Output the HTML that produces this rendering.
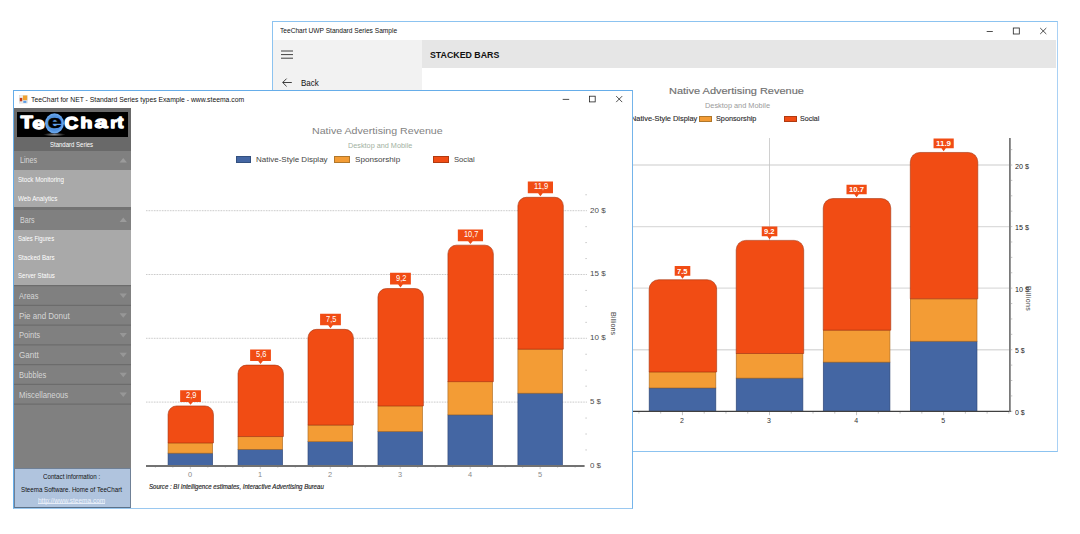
<!DOCTYPE html>
<html><head><meta charset="utf-8"><title>TeeChart Standard Series</title>
<style>
html,body{margin:0;padding:0;}
body{width:1080px;height:534px;background:#fff;position:relative;overflow:hidden;font-family:"Liberation Sans", sans-serif;}
div,span.t,svg{position:absolute;}
span.t{white-space:nowrap;}
</style></head><body>
<div style="left:272.00px;top:21.00px;width:786.00px;height:431.00px;background:#fff;box-sizing:border-box;border:1px solid #8cc3f0;border-right:1.9px solid #a9d1f5;"></div>
<div style="left:273.00px;top:40.00px;width:149.20px;height:411.00px;background:#f2f2f2;"></div>
<div style="left:422.20px;top:40.00px;width:633.90px;height:27.80px;background:#e6e6e6;"></div>
<span class="t" style="left:280.20px;top:26.68px;font-size:8px;line-height:8px;color:#111;transform:scaleX(0.8238);transform-origin:0 0;">TeeChart UWP Standard Series Sample</span>
<svg width="1080" height="534" style="left:0;top:0" viewBox="0 0 1080 534">
<g stroke="#222" stroke-width="0.8" fill="none">
<path d="M986.7 31.5 H992.8"/>
<rect x="1013.3" y="28" width="6" height="6"/>
<path d="M1040.2 28 L1046.3 34 M1046.3 28 L1040.2 34"/>
</g>
<g stroke="#111" stroke-width="0.8" fill="none">
<path d="M281 51 H293 M281 54.6 H293 M281 58.2 H293"/>
<path d="M291.8 82.5 H282.8 M286.6 78.6 L282.7 82.5 L286.6 86.4"/>
</g>
</svg>
<span class="t" style="left:429.70px;top:50.00px;font-size:9.6px;line-height:9.6px;color:#111;font-weight:bold;transform:scaleX(0.9177);transform-origin:0 0;">STACKED BARS</span>
<span class="t" style="left:301.20px;top:77.80px;font-size:9.6px;line-height:9.6px;color:#111;transform:scaleX(0.8340);transform-origin:0 0;">Back</span>
<svg width="1080" height="534" style="left:0;top:0" viewBox="0 0 1080 534"><path d="M600 349.73 H1009" stroke="#dcdcdc" stroke-width="1.3"/>
<path d="M600 288.15 H1009" stroke="#dcdcdc" stroke-width="1.3"/>
<path d="M600 226.58 H1009" stroke="#dcdcdc" stroke-width="1.3"/>
<path d="M600 165.00 H1009" stroke="#dcdcdc" stroke-width="1.3"/>
<path d="M769.5 138 V411" stroke="#c4c4c4" stroke-width="0.8"/>
<path d="M1011 411.30 h1.3" stroke="#999" stroke-width="0.6"/>
<path d="M1011 395.91 h1.3" stroke="#999" stroke-width="0.6"/>
<path d="M1011 380.51 h1.3" stroke="#999" stroke-width="0.6"/>
<path d="M1011 365.12 h1.3" stroke="#999" stroke-width="0.6"/>
<path d="M1011 349.73 h1.3" stroke="#999" stroke-width="0.6"/>
<path d="M1011 334.33 h1.3" stroke="#999" stroke-width="0.6"/>
<path d="M1011 318.94 h1.3" stroke="#999" stroke-width="0.6"/>
<path d="M1011 303.54 h1.3" stroke="#999" stroke-width="0.6"/>
<path d="M1011 288.15 h1.3" stroke="#999" stroke-width="0.6"/>
<path d="M1011 272.76 h1.3" stroke="#999" stroke-width="0.6"/>
<path d="M1011 257.36 h1.3" stroke="#999" stroke-width="0.6"/>
<path d="M1011 241.97 h1.3" stroke="#999" stroke-width="0.6"/>
<path d="M1011 226.58 h1.3" stroke="#999" stroke-width="0.6"/>
<path d="M1011 211.18 h1.3" stroke="#999" stroke-width="0.6"/>
<path d="M1011 195.79 h1.3" stroke="#999" stroke-width="0.6"/>
<path d="M1011 180.39 h1.3" stroke="#999" stroke-width="0.6"/>
<path d="M1011 165.00 h1.3" stroke="#999" stroke-width="0.6"/>
<path d="M1011 149.61 h1.3" stroke="#999" stroke-width="0.6"/>
<path d="M595.40 412 v3.2" stroke="#999" stroke-width="0.6"/>
<path d="M617.16 412 v1.6" stroke="#999" stroke-width="0.6"/>
<path d="M638.92 412 v1.6" stroke="#999" stroke-width="0.6"/>
<path d="M660.69 412 v1.6" stroke="#999" stroke-width="0.6"/>
<path d="M682.45 412 v3.2" stroke="#999" stroke-width="0.6"/>
<path d="M704.21 412 v1.6" stroke="#999" stroke-width="0.6"/>
<path d="M725.98 412 v1.6" stroke="#999" stroke-width="0.6"/>
<path d="M747.74 412 v1.6" stroke="#999" stroke-width="0.6"/>
<path d="M769.50 412 v3.2" stroke="#999" stroke-width="0.6"/>
<path d="M791.26 412 v1.6" stroke="#999" stroke-width="0.6"/>
<path d="M813.03 412 v1.6" stroke="#999" stroke-width="0.6"/>
<path d="M834.79 412 v1.6" stroke="#999" stroke-width="0.6"/>
<path d="M856.55 412 v3.2" stroke="#999" stroke-width="0.6"/>
<path d="M878.31 412 v1.6" stroke="#999" stroke-width="0.6"/>
<path d="M900.08 412 v1.6" stroke="#999" stroke-width="0.6"/>
<path d="M921.84 412 v1.6" stroke="#999" stroke-width="0.6"/>
<path d="M943.60 412 v3.2" stroke="#999" stroke-width="0.6"/>
<path d="M965.36 412 v1.6" stroke="#999" stroke-width="0.6"/>
<path d="M987.12 412 v1.6" stroke="#999" stroke-width="0.6"/>
<path d="M1008.89 412 v1.6" stroke="#999" stroke-width="0.6"/>
<rect x="475.05" y="399.00" width="66.70" height="12.30" fill="#4466A3" stroke="#2c4372" stroke-width="0.6"/>
<rect x="475.05" y="389.17" width="66.70" height="9.84" fill="#F39C35" stroke="#a7671f" stroke-width="0.6"/>
<path d="M475.05 389.17 L475.05 363.01 A9.5 9.5 0 0 1 484.55 353.51 L533.05 353.51 A9.5 9.5 0 0 1 542.55 363.01 L542.55 389.17 Z" fill="#F14C14" stroke="#a5330d" stroke-width="0.6"/>
<rect x="562.10" y="395.31" width="66.70" height="15.99" fill="#4466A3" stroke="#2c4372" stroke-width="0.6"/>
<rect x="562.10" y="383.02" width="66.70" height="12.30" fill="#F39C35" stroke="#a7671f" stroke-width="0.6"/>
<path d="M562.10 383.02 L562.10 323.66 A9.5 9.5 0 0 1 571.60 314.16 L620.10 314.16 A9.5 9.5 0 0 1 629.60 323.66 L629.60 383.02 Z" fill="#F14C14" stroke="#a5330d" stroke-width="0.6"/>
<rect x="649.15" y="387.94" width="66.70" height="23.36" fill="#4466A3" stroke="#2c4372" stroke-width="0.6"/>
<rect x="649.15" y="371.95" width="66.70" height="15.99" fill="#F39C35" stroke="#a7671f" stroke-width="0.6"/>
<path d="M649.15 371.95 L649.15 289.23 A9.5 9.5 0 0 1 658.65 279.73 L707.15 279.73 A9.5 9.5 0 0 1 716.65 289.23 L716.65 371.95 Z" fill="#F14C14" stroke="#a5330d" stroke-width="0.6"/>
<rect x="736.20" y="378.10" width="66.70" height="33.20" fill="#4466A3" stroke="#2c4372" stroke-width="0.6"/>
<rect x="736.20" y="353.51" width="66.70" height="24.59" fill="#F39C35" stroke="#a7671f" stroke-width="0.6"/>
<path d="M736.20 353.51 L736.20 249.88 A9.5 9.5 0 0 1 745.70 240.38 L794.20 240.38 A9.5 9.5 0 0 1 803.70 249.88 L803.70 353.51 Z" fill="#F14C14" stroke="#a5330d" stroke-width="0.6"/>
<rect x="823.25" y="362.11" width="66.70" height="49.19" fill="#4466A3" stroke="#2c4372" stroke-width="0.6"/>
<rect x="823.25" y="330.14" width="66.70" height="31.97" fill="#F39C35" stroke="#a7671f" stroke-width="0.6"/>
<path d="M823.25 330.14 L823.25 208.07 A9.5 9.5 0 0 1 832.75 198.57 L881.25 198.57 A9.5 9.5 0 0 1 890.75 208.07 L890.75 330.14 Z" fill="#F14C14" stroke="#a5330d" stroke-width="0.6"/>
<rect x="910.30" y="341.21" width="66.70" height="70.09" fill="#4466A3" stroke="#2c4372" stroke-width="0.6"/>
<rect x="910.30" y="298.79" width="66.70" height="42.42" fill="#F39C35" stroke="#a7671f" stroke-width="0.6"/>
<path d="M910.30 298.79 L910.30 161.96 A9.5 9.5 0 0 1 919.80 152.46 L968.30 152.46 A9.5 9.5 0 0 1 977.80 161.96 L977.80 298.79 Z" fill="#F14C14" stroke="#a5330d" stroke-width="0.6"/>
<path d="M600 411.3 H1011" stroke="#404040" stroke-width="1.3"/>
<path d="M1009.9 138 V412" stroke="#737373" stroke-width="1.7"/>
<path d="M674.70 266.03 h15.6 v9.6 h-5.60 l-2.2 3 l-2.2 -3 h-5.60 Z" fill="#F14C14"/>
<path d="M761.75 226.62 h15.6 v9.6 h-5.60 l-2.2 3 l-2.2 -3 h-5.60 Z" fill="#F14C14"/>
<path d="M846.50 184.75 h20.2 v9.6 h-7.90 l-2.2 3 l-2.2 -3 h-7.90 Z" fill="#F14C14"/>
<path d="M933.55 138.57 h20.2 v9.6 h-7.90 l-2.2 3 l-2.2 -3 h-7.90 Z" fill="#F14C14"/></svg>
<span class="t" style="left:677.25px;top:267.50px;font-size:7px;line-height:7px;color:#fff;font-weight:bold;transform:scaleX(1.0787);transform-origin:0 0;">7.5</span>
<span class="t" style="left:764.30px;top:228.09px;font-size:7px;line-height:7px;color:#fff;font-weight:bold;transform:scaleX(1.0787);transform-origin:0 0;">9.2</span>
<span class="t" style="left:849.10px;top:186.22px;font-size:7px;line-height:7px;color:#fff;font-weight:bold;transform:scaleX(1.1009);transform-origin:0 0;">10.7</span>
<span class="t" style="left:936.15px;top:140.04px;font-size:7px;line-height:7px;color:#fff;font-weight:bold;transform:scaleX(1.1321);transform-origin:0 0;">11.9</span>
<span class="t" style="left:669.30px;top:87.04px;font-size:9.3px;line-height:9.3px;color:#6f6f6f;transform:scaleX(1.1811);transform-origin:0 0;-webkit-text-stroke:0.15px #6f6f6f;">Native Advertising Revenue</span>
<span class="t" style="left:704.70px;top:101.88px;font-size:7.6px;line-height:7.6px;color:#9a9a9a;transform:scaleX(0.9683);transform-origin:0 0;">Desktop and Mobile</span>
<span class="t" style="left:631.20px;top:115.37px;font-size:7px;line-height:7px;color:#2c2c2c;transform:scaleX(1.0584);transform-origin:0 0;-webkit-text-stroke:0.12px #2c2c2c;">Native-Style Display</span>
<span class="t" style="left:715.60px;top:115.37px;font-size:7px;line-height:7px;color:#2c2c2c;transform:scaleX(1.0380);transform-origin:0 0;-webkit-text-stroke:0.12px #2c2c2c;">Sponsorship</span>
<span class="t" style="left:800.20px;top:115.37px;font-size:7px;line-height:7px;color:#2c2c2c;transform:scaleX(1.0169);transform-origin:0 0;-webkit-text-stroke:0.12px #2c2c2c;">Social</span>
<div style="left:699.20px;top:115.70px;width:13.00px;height:6.00px;background:#F39C35;box-sizing:border-box;border:0.5px solid #b0772b;"></div>
<div style="left:783.70px;top:115.70px;width:13.30px;height:6.00px;background:#F14C14;box-sizing:border-box;border:0.5px solid #b03a10;"></div>
<span class="t" style="left:1014.50px;top:408.87px;font-size:7px;line-height:7px;color:#222;transform:scaleX(0.9965);transform-origin:0 0;">0 $</span>
<span class="t" style="left:1014.50px;top:347.30px;font-size:7px;line-height:7px;color:#222;transform:scaleX(0.9965);transform-origin:0 0;">5 $</span>
<span class="t" style="left:1014.50px;top:285.72px;font-size:7px;line-height:7px;color:#222;transform:scaleX(1.0275);transform-origin:0 0;">10 $</span>
<span class="t" style="left:1014.50px;top:224.15px;font-size:7px;line-height:7px;color:#222;transform:scaleX(1.0275);transform-origin:0 0;">15 $</span>
<span class="t" style="left:1014.50px;top:162.57px;font-size:7px;line-height:7px;color:#222;transform:scaleX(1.0275);transform-origin:0 0;">20 $</span>
<span class="t" style="left:680.05px;top:417.07px;font-size:7px;line-height:7px;color:#333;">2</span>
<span class="t" style="left:767.10px;top:417.07px;font-size:7px;line-height:7px;color:#333;">3</span>
<span class="t" style="left:854.15px;top:417.07px;font-size:7px;line-height:7px;color:#333;">4</span>
<span class="t" style="left:941.20px;top:417.07px;font-size:7px;line-height:7px;color:#333;">5</span>
<div style="left:1031.3px;top:286.2px;width:0;height:0;transform:rotate(90deg);transform-origin:0 0;"><span class="t" style="left:0;top:0;font-size:7px;line-height:6px;color:#444;letter-spacing:0.35px;">Billions</span></div>
<div style="left:13.00px;top:90.00px;width:620.10px;height:418.80px;background:#fff;box-sizing:border-box;border:1px solid #66ade9;border-right:1.1px solid #74b4ea;border-bottom:1.1px solid #9ac8f0;"></div>
<svg width="10" height="10" style="left:18.8px;top:94.6px" viewBox="0 0 10 10">
<rect x="0.4" y="0.7" width="7.8" height="7.4" fill="#efefef" stroke="#d2d2d2" stroke-width="0.5"/>
<rect x="0.8" y="2.9" width="2.5" height="3.4" fill="#c8401c"/>
<rect x="3.9" y="0.5" width="4.3" height="4.7" fill="#efa22f"/>
<rect x="4.3" y="5.8" width="3.1" height="2.1" fill="#5a9ce6"/>
</svg>
<span class="t" style="left:30.90px;top:95.98px;font-size:7.6px;line-height:7.6px;color:#111;transform:scaleX(0.8942);transform-origin:0 0;">TeeChart for NET - Standard Series types Example - www.steema.com</span>
<svg width="1080" height="534" style="left:0;top:0" viewBox="0 0 1080 534">
<g stroke="#222" stroke-width="0.8" fill="none">
<path d="M562.7 99.4 H569.2"/>
<rect x="589.5" y="96.2" width="5.7" height="5.7"/>
<path d="M616.2 96.1 L622.2 102.1 M622.2 96.1 L616.2 102.1"/>
</g></svg>
<div style="left:14.00px;top:108.30px;width:117.00px;height:360.20px;background:#808080;"></div>
<div style="left:14.00px;top:108.30px;width:117.00px;height:42.70px;background:#696969;"></div>
<div style="left:17.00px;top:111.80px;width:111.20px;height:25.40px;background:#000;"></div>
<svg width="112" height="26" style="left:17px;top:111.8px" viewBox="0 0 112 26">
<defs>
<radialGradient id="lg" cx="50%" cy="50%" r="50%"><stop offset="0" stop-color="#6aa5ea"/><stop offset="0.7" stop-color="#4f90de"/><stop offset="0.93" stop-color="#6ba7ea"/><stop offset="1" stop-color="#4a86d4"/></radialGradient>
<radialGradient id="sh" cx="50%" cy="50%" r="50%"><stop offset="0" stop-color="#8a8a8a"/><stop offset="0.6" stop-color="#3a3a3a"/><stop offset="1" stop-color="#000"/></radialGradient>
</defs>
<ellipse cx="37.4" cy="22.6" rx="11.2" ry="1.8" fill="url(#sh)"/>
<g font-family="Liberation Sans, sans-serif" font-weight="bold" stroke-linejoin="round">
<text transform="matrix(0.10811 0 0 0.07818 15.400 16.544)" font-size="200" fill="#fff" stroke="#fff" stroke-width="17.18">e</text>
<text transform="matrix(0.09836 0 0 0.08188 3.800 16.400)" font-size="200" fill="#fff" stroke="#fff" stroke-width="17.75">T</text>
<text transform="matrix(0.09444 0 0 0.08521 47.400 16.630)" font-size="200" fill="#fff" stroke="#fff" stroke-width="17.81">C</text>
<text transform="matrix(0.09672 0 0 0.07724 63.400 16.300)" font-size="200" fill="#fff" stroke="#fff" stroke-width="18.39">h</text>
<text transform="matrix(0.11504 0 0 0.07818 77.800 16.444)" font-size="200" fill="#fff" stroke="#fff" stroke-width="16.56">a</text>
<text transform="matrix(0.08205 0 0 0.07685 93.400 16.300)" font-size="200" fill="#fff" stroke="#fff" stroke-width="20.14">r</text>
<text transform="matrix(0.08657 0 0 0.08195 100.600 16.336)" font-size="200" fill="#fff" stroke="#fff" stroke-width="18.99">t</text>
<ellipse cx="37.5" cy="11.3" rx="9.5" ry="10.1" fill="url(#lg)"/>
<text transform="matrix(0.12523 0 0 0.09545 30.750 16.459)" font-size="200" fill="#000" stroke="#000" stroke-width="6.34">e</text>
</g>
</svg>
<span class="t" style="left:50.20px;top:140.83px;font-size:7.7px;line-height:7.7px;color:#fff;transform:scaleX(0.7816);transform-origin:0 0;">Standard Series</span>
<div style="left:14.00px;top:151.00px;width:117.00px;height:18.50px;background:#808080;"></div>
<div style="left:14.00px;top:169.50px;width:117.00px;height:38.50px;background:#a9a9a9;"></div>
<div style="left:14.00px;top:207.40px;width:117.00px;height:2.90px;background:#737373;"></div>
<div style="left:14.00px;top:210.30px;width:117.00px;height:19.50px;background:#808080;"></div>
<div style="left:14.00px;top:229.80px;width:117.00px;height:55.80px;background:#a9a9a9;"></div>
<span class="t" style="left:20.10px;top:156.49px;font-size:8.8px;line-height:8.8px;color:#d6d6d6;transform:scaleX(0.8178);transform-origin:0 0;">Lines</span>
<span class="t" style="left:20.10px;top:215.99px;font-size:8.8px;line-height:8.8px;color:#d6d6d6;transform:scaleX(0.8069);transform-origin:0 0;">Bars</span>
<span class="t" style="left:19.30px;top:291.89px;font-size:8.8px;line-height:8.8px;color:#d6d6d6;transform:scaleX(0.8484);transform-origin:0 0;">Areas</span>
<span class="t" style="left:19.30px;top:311.59px;font-size:8.8px;line-height:8.8px;color:#d6d6d6;transform:scaleX(0.9092);transform-origin:0 0;">Pie and Donut</span>
<span class="t" style="left:19.30px;top:331.19px;font-size:8.8px;line-height:8.8px;color:#d6d6d6;transform:scaleX(0.8629);transform-origin:0 0;">Points</span>
<span class="t" style="left:19.30px;top:350.99px;font-size:8.8px;line-height:8.8px;color:#d6d6d6;transform:scaleX(0.9203);transform-origin:0 0;">Gantt</span>
<span class="t" style="left:19.30px;top:371.09px;font-size:8.8px;line-height:8.8px;color:#d6d6d6;transform:scaleX(0.8586);transform-origin:0 0;">Bubbles</span>
<span class="t" style="left:19.30px;top:390.89px;font-size:8.8px;line-height:8.8px;color:#d6d6d6;transform:scaleX(0.8825);transform-origin:0 0;">Miscellaneous</span>
<svg width="1080" height="534" style="left:0;top:0" viewBox="0 0 1080 534"><path d="M119.6 162.50 L126.9 162.50 L123.25 158.10 Z" fill="#9b9b9b"/>
<path d="M119.6 222.00 L126.9 222.00 L123.25 217.60 Z" fill="#9b9b9b"/>
<path d="M119.6 293.60 L126.9 293.60 L123.25 298.10 Z" fill="#979797"/>
<path d="M119.6 313.30 L126.9 313.30 L123.25 317.80 Z" fill="#979797"/>
<path d="M119.6 332.90 L126.9 332.90 L123.25 337.40 Z" fill="#979797"/>
<path d="M119.6 352.70 L126.9 352.70 L123.25 357.20 Z" fill="#979797"/>
<path d="M119.6 372.80 L126.9 372.80 L123.25 377.30 Z" fill="#979797"/>
<path d="M119.6 392.60 L126.9 392.60 L123.25 397.10 Z" fill="#979797"/>
<path d="M14 285.60 H131" stroke="#6c6c6c" stroke-width="1.1"/>
<path d="M14 305.40 H131" stroke="#6c6c6c" stroke-width="1.1"/>
<path d="M14 325.10 H131" stroke="#6c6c6c" stroke-width="1.1"/>
<path d="M14 344.90 H131" stroke="#6c6c6c" stroke-width="1.1"/>
<path d="M14 364.60 H131" stroke="#6c6c6c" stroke-width="1.1"/>
<path d="M14 384.40 H131" stroke="#6c6c6c" stroke-width="1.1"/>
<path d="M14 404.10 H131" stroke="#6c6c6c" stroke-width="1.1"/></svg>
<span class="t" style="left:18.20px;top:175.73px;font-size:7.7px;line-height:7.7px;color:#fff;transform:scaleX(0.8033);transform-origin:0 0;">Stock Monitoring</span>
<span class="t" style="left:18.20px;top:194.63px;font-size:7.7px;line-height:7.7px;color:#fff;transform:scaleX(0.8164);transform-origin:0 0;">Web Analytics</span>
<span class="t" style="left:18.20px;top:235.23px;font-size:7.7px;line-height:7.7px;color:#fff;transform:scaleX(0.7681);transform-origin:0 0;">Sales Figures</span>
<span class="t" style="left:18.20px;top:253.63px;font-size:7.7px;line-height:7.7px;color:#fff;transform:scaleX(0.8025);transform-origin:0 0;">Stacked Bars</span>
<span class="t" style="left:18.20px;top:272.33px;font-size:7.7px;line-height:7.7px;color:#fff;transform:scaleX(0.7901);transform-origin:0 0;">Server Status</span>
<div style="left:14.00px;top:468.40px;width:117.00px;height:39.40px;background:#b0c4de;box-sizing:border-box;border:0.8px solid #6f8096;border-bottom:1px solid #5c7189;"></div>
<span class="t" style="left:43.40px;top:473.28px;font-size:7.8px;line-height:7.8px;color:#111;transform:scaleX(0.7950);transform-origin:0 0;">Contact information :</span>
<span class="t" style="left:21.00px;top:485.88px;font-size:7.8px;line-height:7.8px;color:#111;transform:scaleX(0.7935);transform-origin:0 0;">Steema Software. Home of TeeChart</span>
<span class="t" style="left:38.00px;top:496.88px;font-size:7.8px;line-height:7.8px;color:#eef3fb;transform:scaleX(0.8336);transform-origin:0 0;">http://www.steema.com</span>
<div style="left:38.00px;top:503.00px;width:67.20px;height:0.70px;background:#e6edf8;"></div>
<svg width="1080" height="534" style="left:0;top:0" viewBox="0 0 1080 534"><path d="M146 402.10 H587.5" stroke="#adadad" stroke-width="0.8" stroke-dasharray="0.8 0.8"/>
<path d="M146 338.30 H587.5" stroke="#adadad" stroke-width="0.8" stroke-dasharray="0.8 0.8"/>
<path d="M146 274.50 H587.5" stroke="#adadad" stroke-width="0.8" stroke-dasharray="0.8 0.8"/>
<path d="M146 210.70 H587.5" stroke="#adadad" stroke-width="0.8" stroke-dasharray="0.8 0.8"/>
<path d="M585.4 449.95 h1.4" stroke="#aaa" stroke-width="0.7"/>
<path d="M585.4 434.00 h1.4" stroke="#aaa" stroke-width="0.7"/>
<path d="M585.4 418.05 h1.4" stroke="#aaa" stroke-width="0.7"/>
<path d="M585.4 386.15 h1.4" stroke="#aaa" stroke-width="0.7"/>
<path d="M585.4 370.20 h1.4" stroke="#aaa" stroke-width="0.7"/>
<path d="M585.4 354.25 h1.4" stroke="#aaa" stroke-width="0.7"/>
<path d="M585.4 322.35 h1.4" stroke="#aaa" stroke-width="0.7"/>
<path d="M585.4 306.40 h1.4" stroke="#aaa" stroke-width="0.7"/>
<path d="M585.4 290.45 h1.4" stroke="#aaa" stroke-width="0.7"/>
<path d="M585.4 258.55 h1.4" stroke="#aaa" stroke-width="0.7"/>
<path d="M585.4 242.60 h1.4" stroke="#aaa" stroke-width="0.7"/>
<path d="M585.4 226.65 h1.4" stroke="#aaa" stroke-width="0.7"/>
<path d="M585.4 194.75 h1.4" stroke="#aaa" stroke-width="0.7"/>
<path d="M155.37 466.4 v1.4" stroke="#aaa" stroke-width="0.6"/>
<path d="M172.86 466.4 v1.4" stroke="#aaa" stroke-width="0.6"/>
<path d="M190.35 466.4 v2.8" stroke="#aaa" stroke-width="0.6"/>
<path d="M207.84 466.4 v1.4" stroke="#aaa" stroke-width="0.6"/>
<path d="M225.33 466.4 v1.4" stroke="#aaa" stroke-width="0.6"/>
<path d="M242.82 466.4 v1.4" stroke="#aaa" stroke-width="0.6"/>
<path d="M260.31 466.4 v2.8" stroke="#aaa" stroke-width="0.6"/>
<path d="M277.80 466.4 v1.4" stroke="#aaa" stroke-width="0.6"/>
<path d="M295.29 466.4 v1.4" stroke="#aaa" stroke-width="0.6"/>
<path d="M312.78 466.4 v1.4" stroke="#aaa" stroke-width="0.6"/>
<path d="M330.27 466.4 v2.8" stroke="#aaa" stroke-width="0.6"/>
<path d="M347.76 466.4 v1.4" stroke="#aaa" stroke-width="0.6"/>
<path d="M365.25 466.4 v1.4" stroke="#aaa" stroke-width="0.6"/>
<path d="M382.74 466.4 v1.4" stroke="#aaa" stroke-width="0.6"/>
<path d="M400.23 466.4 v2.8" stroke="#aaa" stroke-width="0.6"/>
<path d="M417.72 466.4 v1.4" stroke="#aaa" stroke-width="0.6"/>
<path d="M435.21 466.4 v1.4" stroke="#aaa" stroke-width="0.6"/>
<path d="M452.70 466.4 v1.4" stroke="#aaa" stroke-width="0.6"/>
<path d="M470.19 466.4 v2.8" stroke="#aaa" stroke-width="0.6"/>
<path d="M487.68 466.4 v1.4" stroke="#aaa" stroke-width="0.6"/>
<path d="M505.17 466.4 v1.4" stroke="#aaa" stroke-width="0.6"/>
<path d="M522.66 466.4 v1.4" stroke="#aaa" stroke-width="0.6"/>
<path d="M540.15 466.4 v2.8" stroke="#aaa" stroke-width="0.6"/>
<path d="M557.64 466.4 v1.4" stroke="#aaa" stroke-width="0.6"/>
<path d="M575.13 466.4 v1.4" stroke="#aaa" stroke-width="0.6"/>
<rect x="168.05" y="453.14" width="44.60" height="12.76" fill="#4466A3" stroke="#2c4372" stroke-width="0.6"/>
<rect x="168.05" y="442.93" width="44.60" height="10.21" fill="#F39C35" stroke="#a7671f" stroke-width="0.6"/>
<path d="M168.05 442.93 L168.05 414.43 A8.5 8.5 0 0 1 176.55 405.93 L204.95 405.93 A8.5 8.5 0 0 1 213.45 414.43 L213.45 442.93 Z" fill="#F14C14" stroke="#a5330d" stroke-width="0.6"/>
<rect x="238.02" y="449.31" width="44.60" height="16.59" fill="#4466A3" stroke="#2c4372" stroke-width="0.6"/>
<rect x="238.02" y="436.55" width="44.60" height="12.76" fill="#F39C35" stroke="#a7671f" stroke-width="0.6"/>
<path d="M238.02 436.55 L238.02 373.60 A8.5 8.5 0 0 1 246.52 365.10 L274.92 365.10 A8.5 8.5 0 0 1 283.42 373.60 L283.42 436.55 Z" fill="#F14C14" stroke="#a5330d" stroke-width="0.6"/>
<rect x="307.99" y="441.66" width="44.60" height="24.24" fill="#4466A3" stroke="#2c4372" stroke-width="0.6"/>
<rect x="307.99" y="425.07" width="44.60" height="16.59" fill="#F39C35" stroke="#a7671f" stroke-width="0.6"/>
<path d="M307.99 425.07 L307.99 337.87 A8.5 8.5 0 0 1 316.49 329.37 L344.89 329.37 A8.5 8.5 0 0 1 353.39 337.87 L353.39 425.07 Z" fill="#F14C14" stroke="#a5330d" stroke-width="0.6"/>
<rect x="377.96" y="431.45" width="44.60" height="34.45" fill="#4466A3" stroke="#2c4372" stroke-width="0.6"/>
<rect x="377.96" y="405.93" width="44.60" height="25.52" fill="#F39C35" stroke="#a7671f" stroke-width="0.6"/>
<path d="M377.96 405.93 L377.96 297.04 A8.5 8.5 0 0 1 386.46 288.54 L414.86 288.54 A8.5 8.5 0 0 1 423.36 297.04 L423.36 405.93 Z" fill="#F14C14" stroke="#a5330d" stroke-width="0.6"/>
<rect x="447.93" y="414.86" width="44.60" height="51.04" fill="#4466A3" stroke="#2c4372" stroke-width="0.6"/>
<rect x="447.93" y="381.68" width="44.60" height="33.18" fill="#F39C35" stroke="#a7671f" stroke-width="0.6"/>
<path d="M447.93 381.68 L447.93 253.65 A8.5 8.5 0 0 1 456.43 245.15 L484.83 245.15 A8.5 8.5 0 0 1 493.33 253.65 L493.33 381.68 Z" fill="#F14C14" stroke="#a5330d" stroke-width="0.6"/>
<rect x="517.90" y="393.17" width="44.60" height="72.73" fill="#4466A3" stroke="#2c4372" stroke-width="0.6"/>
<rect x="517.90" y="349.15" width="44.60" height="44.02" fill="#F39C35" stroke="#a7671f" stroke-width="0.6"/>
<path d="M517.90 349.15 L517.90 205.80 A8.5 8.5 0 0 1 526.40 197.30 L554.80 197.30 A8.5 8.5 0 0 1 563.30 205.80 L563.30 349.15 Z" fill="#F14C14" stroke="#a5330d" stroke-width="0.6"/>
<path d="M146 466.0 H584.6" stroke="#727272" stroke-width="2"/>
<path d="M180.15 390.23 h20.8 v11.7 h-8.10 l-2.3 2.9 l-2.3 -2.9 h-8.10 Z" fill="#F14C14"/>
<path d="M250.12 349.40 h20.8 v11.7 h-8.10 l-2.3 2.9 l-2.3 -2.9 h-8.10 Z" fill="#F14C14"/>
<path d="M320.09 313.67 h20.8 v11.7 h-8.10 l-2.3 2.9 l-2.3 -2.9 h-8.10 Z" fill="#F14C14"/>
<path d="M390.06 272.84 h20.8 v11.7 h-8.10 l-2.3 2.9 l-2.3 -2.9 h-8.10 Z" fill="#F14C14"/>
<path d="M457.83 229.45 h25.2 v11.7 h-10.30 l-2.3 2.9 l-2.3 -2.9 h-10.30 Z" fill="#F14C14"/>
<path d="M527.80 181.60 h25.2 v11.7 h-10.30 l-2.3 2.9 l-2.3 -2.9 h-10.30 Z" fill="#F14C14"/></svg>
<span class="t" style="left:186.15px;top:391.06px;font-size:8.5px;line-height:8.5px;color:#fff;transform:scaleX(0.8793);transform-origin:0 0;">2,9</span>
<span class="t" style="left:256.12px;top:350.23px;font-size:8.5px;line-height:8.5px;color:#fff;transform:scaleX(0.8793);transform-origin:0 0;">5,6</span>
<span class="t" style="left:326.09px;top:314.50px;font-size:8.5px;line-height:8.5px;color:#fff;transform:scaleX(0.8793);transform-origin:0 0;">7,5</span>
<span class="t" style="left:396.06px;top:273.67px;font-size:8.5px;line-height:8.5px;color:#fff;transform:scaleX(0.8793);transform-origin:0 0;">9,2</span>
<span class="t" style="left:464.33px;top:230.29px;font-size:8.5px;line-height:8.5px;color:#fff;transform:scaleX(0.8703);transform-origin:0 0;">10,7</span>
<span class="t" style="left:534.30px;top:182.44px;font-size:8.5px;line-height:8.5px;color:#fff;transform:scaleX(0.9044);transform-origin:0 0;">11,9</span>
<span class="t" style="left:312.00px;top:125.90px;font-size:9.8px;line-height:9.8px;color:#828282;transform:scaleX(1.0859);transform-origin:0 0;">Native Advertising Revenue</span>
<span class="t" style="left:347.60px;top:141.97px;font-size:7.4px;line-height:7.4px;color:#9fb1a1;transform:scaleX(0.9843);transform-origin:0 0;">Desktop and Mobile</span>
<span class="t" style="left:256.00px;top:155.88px;font-size:7.6px;line-height:7.6px;color:#444;transform:scaleX(1.0537);transform-origin:0 0;">Native-Style Display</span>
<span class="t" style="left:354.80px;top:155.88px;font-size:7.6px;line-height:7.6px;color:#444;transform:scaleX(1.0706);transform-origin:0 0;">Sponsorship</span>
<span class="t" style="left:453.50px;top:155.88px;font-size:7.6px;line-height:7.6px;color:#444;transform:scaleX(1.0054);transform-origin:0 0;">Social</span>
<div style="left:235.60px;top:156.20px;width:15.70px;height:6.80px;background:#4466A3;box-sizing:border-box;border:0.5px solid #33507f;"></div>
<div style="left:333.90px;top:156.20px;width:16.10px;height:6.80px;background:#F39C35;box-sizing:border-box;border:0.5px solid #b0772b;"></div>
<div style="left:433.00px;top:156.20px;width:15.70px;height:6.80px;background:#F14C14;box-sizing:border-box;border:0.5px solid #b03a10;"></div>
<span class="t" style="left:589.50px;top:461.78px;font-size:7.6px;line-height:7.6px;color:#4a4a4a;transform:scaleX(1.0414);transform-origin:0 0;">0 $</span>
<span class="t" style="left:589.50px;top:397.98px;font-size:7.6px;line-height:7.6px;color:#4a4a4a;transform:scaleX(1.0414);transform-origin:0 0;">5 $</span>
<span class="t" style="left:589.50px;top:334.18px;font-size:7.6px;line-height:7.6px;color:#4a4a4a;transform:scaleX(1.0554);transform-origin:0 0;">10 $</span>
<span class="t" style="left:589.50px;top:270.38px;font-size:7.6px;line-height:7.6px;color:#4a4a4a;transform:scaleX(1.0554);transform-origin:0 0;">15 $</span>
<span class="t" style="left:589.50px;top:206.58px;font-size:7.6px;line-height:7.6px;color:#4a4a4a;transform:scaleX(1.0554);transform-origin:0 0;">20 $</span>
<span class="t" style="left:188.04px;top:470.97px;font-size:7.4px;line-height:7.4px;color:#8a8a8a;">0</span>
<span class="t" style="left:258.01px;top:470.97px;font-size:7.4px;line-height:7.4px;color:#8a8a8a;">1</span>
<span class="t" style="left:327.98px;top:470.97px;font-size:7.4px;line-height:7.4px;color:#8a8a8a;">2</span>
<span class="t" style="left:397.95px;top:470.97px;font-size:7.4px;line-height:7.4px;color:#8a8a8a;">3</span>
<span class="t" style="left:467.92px;top:470.97px;font-size:7.4px;line-height:7.4px;color:#8a8a8a;">4</span>
<span class="t" style="left:537.89px;top:470.97px;font-size:7.4px;line-height:7.4px;color:#8a8a8a;">5</span>
<span class="t" style="left:148.90px;top:484.07px;font-size:6.6px;line-height:6.6px;color:#222;font-style:italic;transform:scaleX(0.9236);transform-origin:0 0;-webkit-text-stroke:0.15px #222;">Source : BI Intelligence estimates, Interactive Advertising Bureau</span>
<div style="left:616.3px;top:311.5px;width:0;height:0;transform:rotate(90deg);transform-origin:0 0;"><span class="t" style="left:0;top:0;font-size:7.2px;line-height:6.4px;color:#444;letter-spacing:0.05px;">Billions</span></div>
</body></html>
